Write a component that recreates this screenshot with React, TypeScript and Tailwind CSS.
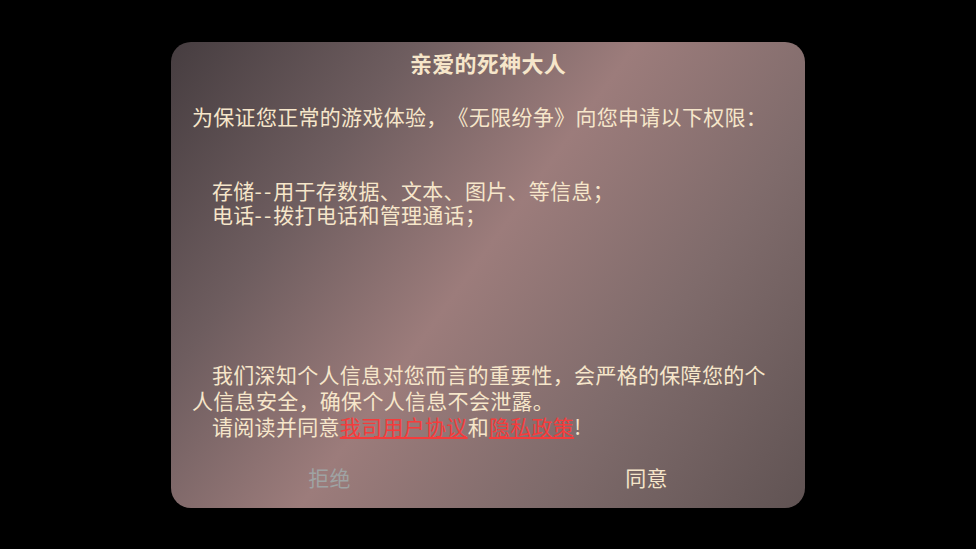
import React from "react";

const font = { fontFamily: '"Noto Sans CJK SC", "Noto Sans", sans-serif' };

const Link = ({ children }: { children: React.ReactNode }) => (
  <span className="text-[#f53c3c] underline decoration-[#f53c3c] underline-offset-2">{children}</span>
);

const Dash = () => <span className="tracking-[2px]">--</span>;

export default function App() {
  return (
    <div className="flex h-[549px] w-full items-center justify-center bg-black" style={font}>
      <div className="flex h-[466px] w-[634px] flex-col rounded-[20px] bg-[linear-gradient(126deg,#463d40_0%,#6e5d5f_25%,#9c7c7b_48%,#7f6b6b_72%,#605353_100%)] px-[21px] text-[21px] tracking-[0.3px] text-[#f6e6ca] [text-spacing-trim:space-all]">
        <div className="pt-[7px] text-center text-[22px] font-bold leading-[26px]">亲爱的死神大人</div>
        <div className="mt-[28px] whitespace-nowrap leading-[26px]">为保证您正常的游戏体验，《无限纷争》向您申请以下权限：</div>
        <div className="mt-[49px] pl-[20px] leading-[24px]">
          <div>存储<Dash />用于存数据、文本、图片、等信息；</div>
          <div>电话<Dash />拨打电话和管理通话；</div>
        </div>
        <div className="mt-[135px] leading-[26px]">
          <div className="whitespace-nowrap pl-[20px]">我们深知个人信息对您而言的重要性，会严格的保障您的个</div>
          <div>人信息安全，确保个人信息不会泄露。</div>
          <div className="pl-[20px]">
            请阅读并同意<Link>我司用户协议</Link>和<Link>隐私政策</Link>!
          </div>
        </div>
        <div className="-mx-[21px] mt-[19px] flex h-[40px]">
          <button className="flex flex-1 items-center justify-center text-[21px] text-[#9fa3a3]">拒绝</button>
          <button className="flex flex-1 items-center justify-center text-[21px] text-[#f6e6ca]">同意</button>
        </div>
      </div>
    </div>
  );
}
